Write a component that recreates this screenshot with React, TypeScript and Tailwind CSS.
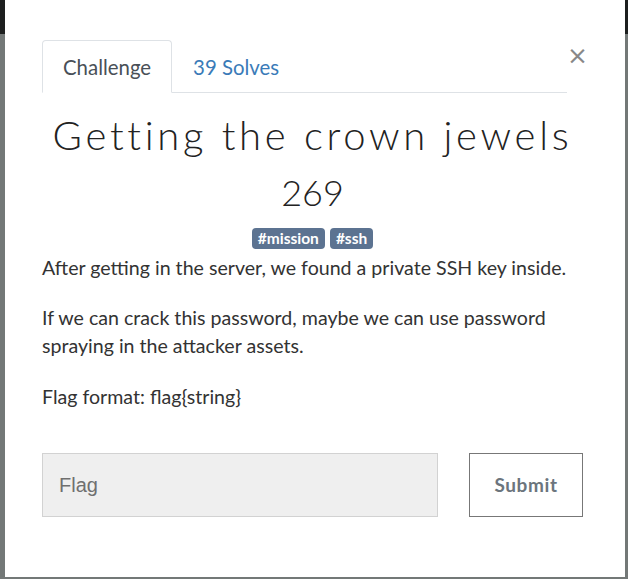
import React from "react";

const tags = ["#mission", "#ssh"];

export default function App() {
    return (
        <div className="h-[579px] w-full overflow-hidden bg-[linear-gradient(to_bottom,#1d1f1f_34px,#737877_34px)] pl-[5px] pr-[3px] font-['Lato',sans-serif]">
            <div className="h-[577px] bg-white pl-[37px] pr-[42px] pt-[40px] text-[#333]">
                {/* Tabs header */}
                <div className="flex items-start">
                    <ul className="flex flex-1 border-b border-[#dee2e6]">
                        <li className="-mb-px rounded-t-[4px] border border-[#dee2e6] border-b-white bg-white px-[20px] pt-[16px] pb-[14px] text-[20.4px] leading-[20px] text-[#495057]">
                            Challenge
                        </li>
                        <li className="border border-transparent px-[20px] pt-[16px] pb-[14px] text-[20.4px] leading-[20px] text-[#3a7bb8]">
                            39 Solves
                        </li>
                    </ul>
                    <button className="mt-[3px] w-[16px] text-left text-[25px] leading-[26px] text-[#888] font-['DejaVu_Sans',sans-serif]">
                        ×
                    </button>
                </div>

                {/* Title */}
                <h3 className="mt-[18px] text-center font-light text-[40px] leading-[48px] tracking-[3.7px] text-[#222]">
                    Getting the crown jewels
                </h3>
                <h4 className="mt-[13px] text-center font-light text-[36px] leading-[40px] text-[#222]">
                    269
                </h4>

                {/* Tags */}
                <div className="mt-[16px] flex justify-center gap-[5px]">
                    {tags.map((t) => (
                        <span
                            key={t}
                            className="rounded-[4px] bg-[#5c7391] px-[6px] text-[15.5px] leading-[21px] font-bold text-white"
                        >
                            {t}
                        </span>
                    ))}
                </div>

                {/* Description */}
                <div className="mt-[5px] text-[19.6px] leading-[28px]">
                    <p className="mb-[22px]">After getting in the server, we found a private SSH key inside.</p>
                    <p className="mb-[23px]">
                        If we can crack this password, maybe we can use password spraying in the attacker assets.
                    </p>
                    <p>Flag format: flag{"{"}string{"}"}</p>
                </div>

                {/* Submit row */}
                <div className="mt-[42px] flex items-center justify-between">
                    <input
                        placeholder="Flag"
                        className="h-[64px] w-[396px] border border-[#d2d2d2] bg-[#efefef] px-[16px] text-[20px] font-['Liberation_Sans',sans-serif] placeholder:text-[#6f6f6f] outline-none"
                    />
                    <button className="h-[64px] w-[114px] border border-[#777] bg-white text-[19px] font-bold tracking-[0.6px] text-[#6c757d]">
                        Submit
                    </button>
                </div>
            </div>
        </div>
    );
}
